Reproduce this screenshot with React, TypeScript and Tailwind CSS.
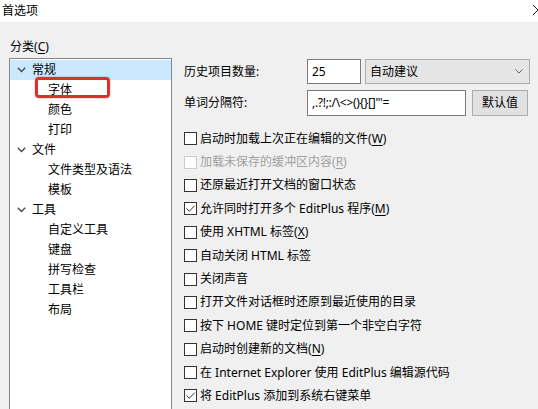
import React from "react"

const font = "font-['Noto_Sans','Noto_Sans_CJK_SC','Microsoft_YaHei',sans-serif]"

type TreeNode = { label: string; children?: string[] }

const tree: TreeNode[] = [
  { label: "常规", children: ["字体", "颜色", "打印"] },
  { label: "文件", children: ["文件类型及语法", "模板"] },
  { label: "工具", children: ["自定义工具", "键盘", "拼写检查", "工具栏", "布局"] },
]

function Key({ k }: { k: string }) {
  return (
    <>
      (<span className="underline underline-offset-2">{k}</span>)
    </>
  )
}

const options: { label: React.ReactNode; checked?: boolean; disabled?: boolean }[] = [
  { label: <>启动时加载上次正在编辑的文件<Key k="W" /></> },
  { label: <>加载未保存的缓冲区内容<Key k="R" /></>, disabled: true },
  { label: "还原最近打开文档的窗口状态" },
  { label: <>允许同时打开多个 EditPlus 程序<Key k="M" /></>, checked: true },
  { label: <>使用 XHTML 标签<Key k="X" /></> },
  { label: "自动关闭 HTML 标签" },
  { label: "关闭声音" },
  { label: "打开文件对话框时还原到最近使用的目录" },
  { label: "按下 HOME 键时定位到第一个非空白字符" },
  { label: <>启动时创建新的文档<Key k="N" /></> },
  { label: "在 Internet Explorer 使用 EditPlus 编辑源代码" },
  { label: "将 EditPlus 添加到系统右键菜单", checked: true },
]

function Chevron() {
  return (
    <svg width="9" height="6" viewBox="0 0 9 6" className="shrink-0">
      <path d="M0.8 0.8 L4.5 4.5 L8.2 0.8" fill="none" stroke="#444" strokeWidth="1.3" />
    </svg>
  )
}

function Checkbox({ checked, disabled }: { checked?: boolean; disabled?: boolean }) {
  return (
    <span
      className={
        "flex h-[13px] w-[13px] shrink-0 items-center justify-center border bg-white " +
        (disabled ? "border-[#cccccc]" : "border-[#333333]")
      }
    >
      {checked && (
        <svg width="11" height="11" viewBox="0 0 11 11">
          <path d="M1.5 5.5 L4.3 8.3 L9.7 2.6" fill="none" stroke="#333" strokeWidth="1" />
        </svg>
      )}
    </span>
  )
}

export default function App() {
  return (
    <div className={`flex h-[409px] w-[538px] flex-col overflow-hidden bg-[#f0f0f0] text-[12px] text-black ${font}`}>
      {/* title bar, close button cut off at the right edge */}
      <div className="flex h-[22px] shrink-0 items-center justify-between overflow-hidden bg-white pl-[2px]">
        <span className="leading-[16px]">首选项</span>
        <svg width="12" height="12" viewBox="0 0 12 12" className="-mr-[6px] mb-[3px] shrink-0">
          <path d="M1 1 L11 11 M11 1 L1 11" stroke="#222" strokeWidth="1" />
        </svg>
      </div>

      <div className="flex flex-1">
        {/* category tree */}
        <div className="ml-[9px] flex w-[163px] flex-col">
          <div className="ml-px mt-[17px] h-[16px] leading-[16px]">
            分类<Key k="C" />
          </div>
          <div className="mt-[3px] h-[400px] border border-[#828790] bg-white pt-px">
            {tree.map((node, i) => (
              <div key={node.label}>
                <div
                  className={
                    "flex h-[20px] items-center leading-[20px] " + (i === 0 ? "bg-[#cce8ff]" : "")
                  }
                >
                  <span className="ml-[7px] mr-[6px] flex w-[9px]">
                    <Chevron />
                  </span>
                  <span>{node.label}</span>
                </div>
                {node.children?.map((c) => (
                  <div key={c} className="relative flex h-[20px] items-center pl-[38px] leading-[20px]">
                    {c}
                    {c === "字体" && (
                      <span className="absolute left-[25px] top-[-3px] h-[21px] w-[75px] rounded-[4px] border-[3px] border-[#d8322c] shadow-[0_0_2px_rgba(200,40,40,0.5)]" />
                    )}
                  </div>
                ))}
              </div>
            ))}
          </div>
        </div>

        {/* settings */}
        <div className="ml-[12px] mt-[37px] flex flex-1 flex-col pr-[8px]">
          <div className="flex h-[25px] items-center">
            <span className="w-[123px] shrink-0">历史项目数量:</span>
            <div className="flex h-[25px] w-[54px] items-center border border-[#7a7a7a] bg-white pl-[4px]">25</div>
            <div className="ml-[4px] flex h-[25px] w-[165px] items-center justify-between border border-[#adadad] bg-[#e5e5e5] pl-[4px] pr-[6px]">
              <span>自动建议</span>
              <svg width="8" height="5" viewBox="0 0 8 5">
                <path d="M0.5 0.5 L4 4 L7.5 0.5" fill="none" stroke="#606060" strokeWidth="1" />
              </svg>
            </div>
          </div>

          <div className="mt-[5px] flex h-[27px] items-center">
            <span className="w-[123px] shrink-0">单词分隔符:</span>
            <div className="flex h-[26px] w-[159px] items-center border border-[#7a7a7a] bg-white pl-[4px] tracking-[-0.3px]">
              ,.?!;:/\&lt;&gt;(){"{}"}[]"'=
            </div>
            <button className="ml-[6px] flex h-[26px] w-[56px] items-center justify-center border border-[#adadad] bg-[#e1e1e1]">
              默认值
            </button>
          </div>

          <div className="mt-[11px] flex flex-col">
            {options.map((o, i) => (
              <div key={i} className="flex h-[23.4px] items-center">
                <Checkbox checked={o.checked} disabled={o.disabled} />
                <span className={"ml-[3px] whitespace-nowrap leading-[16px] " + (o.disabled ? "text-[#a0a0a0]" : "")}>
                  {o.label}
                </span>
              </div>
            ))}
          </div>
        </div>
      </div>
    </div>
  )
}
